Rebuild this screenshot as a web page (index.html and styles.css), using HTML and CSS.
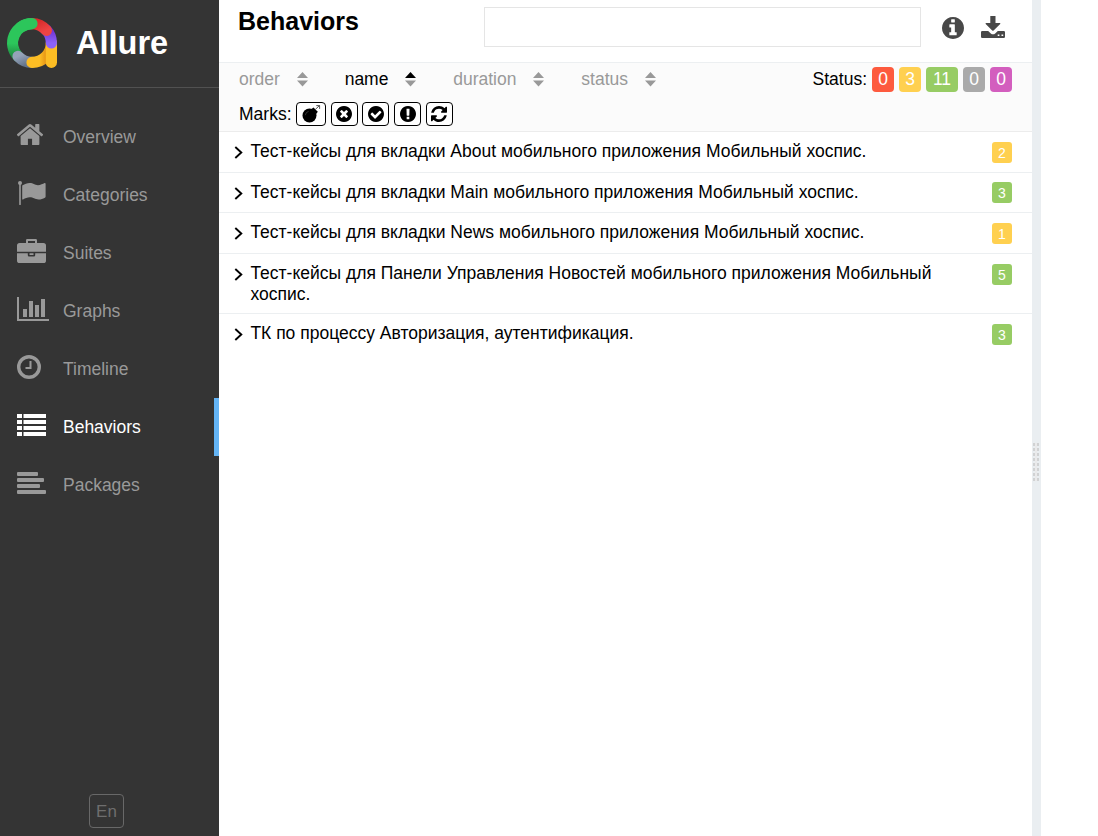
FILE: index.html
```html
<!DOCTYPE html>
<html lang="en">
<head>
<meta charset="utf-8">
<title>Allure Report</title>
<link rel="stylesheet" href="styles.css">
</head>
<body>
<div class="app">
  <aside class="side">
    <div class="brand">
      <svg class="logo" viewBox="0 0 50 50" stroke-width="11.2" stroke-linecap="round">
        <defs>
          <linearGradient id="green" x1="0" y1="0" x2="0" y2="1"><stop offset=".6" stop-color="#2cc65b"/><stop offset="1" stop-color="#1f8a41"/></linearGradient>
          <linearGradient id="red" x1="0" y1="0" x2="1" y2="1"><stop offset="0" stop-color="#d62b2b"/><stop offset="1" stop-color="#ee4444"/></linearGradient>
          <linearGradient id="purple" x1="0" y1="0" x2="0" y2="1"><stop offset="0" stop-color="#7030d0"/><stop offset="1" stop-color="#8b62fa"/></linearGradient>
          <linearGradient id="gray" x1="0" y1="0" x2="1" y2="1"><stop offset="0" stop-color="#94a3b8"/><stop offset="1" stop-color="#64748b"/></linearGradient>
          <linearGradient id="amber" x1="0" y1="0" x2="1" y2="0"><stop offset=".4" stop-color="#fcbd24"/><stop offset=".8" stop-color="#e08a12"/></linearGradient>
        </defs>
        <path stroke="url(#green)" d="M25 5.600A19.400 19.400 0 0 0 11 38.400"/>
        <path stroke="url(#gray)" d="M11 38.400A19.400 19.400 0 0 0 25 44.400"/>
        <path stroke="url(#amber)" d="M25 44.400A19.400 19.400 0 0 0 44.400 25"/>
        <path stroke="#fcbd24" d="M44.400 25V44.400"/>
        <path stroke="url(#purple)" d="M39 11.600A19.400 19.400 0 0 1 44.400 25"/>
        <path stroke="url(#red)" d="M25 5.600A19.400 19.400 0 0 1 39.400 12.400"/>
        <path stroke="#2cc65b" d="M14 9.100A19.400 19.400 0 0 1 25 5.600"/>
      </svg>
      <span>Allure</span>
    </div>
    <nav class="menu">
      <a class="item"><span class="glyph"><svg width="26" height="21" viewBox="97 253 1598 1283" preserveAspectRatio="none"><path d="M1472 992v480q0 26-19 45t-45 19h-384v-384h-256v384h-384q-26 0-45-19t-19-45v-480q0-1 .5-3t.5-3l575-474 575 474q1 2 1 6zm223-69l-62 74q-8 9-21 11h-3q-13 0-21-7l-692-577-692 577q-12 8-24 7-13-2-21-11l-62-74q-8-10-7-23.5t11-21.5l719-599q32-26 76-26t76 26l244 204v-195q0-14 9-23t23-9h192q14 0 23 9t9 23v408l219 182q10 8 11 21.5t-7 23.5z"/></svg></span>Overview</a>
      <a class="item"><span class="glyph"><svg width="29" height="24" viewBox="0 0 29 24"><circle cx="3" cy="2" r="2"/><path d="M2.2 2h1.6v21.4q0 .6-.6.6h-.4q-.6 0-.6-.6zM5.2 4.6C8 3 10 2.1 12.6 2.1c4 0 5 2.1 8.4 2.1 2.500 0 4.800-1.300 6.600-2.100q1-.3 1 .8v12.800q0 .7-.7 1c-2 1-3.900 1.800-6.200 1.800-4 0-5.200-2.200-9-2.200-2.400 0-4.400 1-6.600 2.200q-.9.400-.9-.6V5.600q0-.7 0-1z"/></svg></span>Categories</a>
      <a class="item"><span class="glyph"><svg width="29" height="24" viewBox="0 0 29 24"><path fill-rule="evenodd" d="M9 4V1.300Q9 0 10.300 0h8.400Q20 0 20 1.300V4h6.400Q29 4 29 6.600V12.700H0V6.600Q0 4 2.600 4zM11 4h7V2h-7zM0 14.200h10.800V16.300q0 1.200 1.200 1.200h5q1.200 0 1.200-1.200V14.200H29v7.200Q29 24 26.400 24H2.600Q0 24 0 21.400zM12.500 14.200h4v1.900h-4z"/></svg></span>Suites</a>
      <a class="item"><span class="glyph"><svg width="32" height="24" viewBox="0 0 32 24"><path d="M0 0h2v22h30v2H0zM6 12h4v8H6zM12 4h4v16h-4zM18 8h4v12h-4zM24 2h4v18h-4z"/></svg></span>Graphs</a>
      <a class="item"><span class="glyph"><svg width="25" height="24" viewBox="0 0 25 24"><circle class="ring" cx="12" cy="12" r="10.300"/><path d="M12.500 6H14.500V14H8.500V12H12.500z"/></svg></span>Timeline</a>
      <a class="item active"><span class="glyph"><svg width="29" height="22" viewBox="0 0 29 22"><path d="M0 0h5v4H0zM6.500 0H29v4H6.500zM0 6h5v4H0zM6.500 6H29v4H6.500zM0 12h5v4H0zM6.500 12H29v4H6.500zM0 18h5v4H0zM6.500 18H29v4H6.500z"/></svg></span>Behaviors</a>
      <a class="item"><span class="glyph"><svg width="29" height="22" viewBox="0 0 29 22"><rect width="21" height="4" rx="1"/><rect y="6" width="27" height="4" rx="1"/><rect y="12" width="23" height="4" rx="1"/><rect y="18" width="29" height="4" rx="1"/></svg></span>Packages</a>
    </nav>
    <div class="foot"><button class="lang">En</button></div>
  </aside>

  <main class="pane">
    <header class="head">
      <h1>Behaviors</h1>
      <input class="search" type="text">
      <div class="actions">
        <svg width="22" height="22" viewBox="128 128 1536 1536"><path fill-rule="evenodd" d="M1152 1376v-160q0-14-9-23t-23-9h-96v-512q0-14-9-23t-23-9h-320q-14 0-23 9t-9 23v160q0 14 9 23t23 9h96v320h-96q-14 0-23 9t-9 23v160q0 14 9 23t23 9h448q14 0 23-9t9-23zm-128-896v-160q0-14-9-23t-23-9h-192q-14 0-23 9t-9 23v160q0 14 9 23t23 9h192q14 0 23-9t9-23zm640 416q0 209-103 385.500t-279.500 279.500-385.500 103-385.500-103-279.500-279.500-103-385.500 103-385.500 279.500-279.500 385.500-103 385.500 103 279.500 279.500 103 385.500z"/></svg>
        <svg width="24" height="22" viewBox="0 0 24 22"><path fill-rule="evenodd" d="M9.300 0h5.200v7h4.300q1 .2.400 1L12.600 14.400q-.7.600-1.400 0L4.700 8q-.5-.8.400-1h4.200zM1.200 15h6l2.600 2.400q2.200 1.700 4.400 0L16.800 15h6q1.200 0 1.200 1.200v4.600Q24 22 22.800 22H1.200Q0 22 0 20.800v-4.600Q0 15 1.200 15zM16.700 18.500v1.600h1.700v-1.600zM20.500 18.500v1.600h1.700v-1.600z"/></svg>
      </div>
    </header>

    <section class="controls">
      <div class="bar">
        <div class="sorters">
          <span class="sorter">order<svg class="arrows" viewBox="0 0 11 14"><path d="M0 6L5.500 0 11 6zM0 8.500H11L5.500 14.500z"/></svg></span>
          <span class="sorter on">name<svg class="arrows" viewBox="0 0 11 14"><path d="M0 6L5.500 0 11 6z"/><path class="dim" d="M0 8.500H11L5.500 14.500z"/></svg></span>
          <span class="sorter">duration<svg class="arrows" viewBox="0 0 11 14"><path d="M0 6L5.500 0 11 6zM0 8.500H11L5.500 14.500z"/></svg></span>
          <span class="sorter">status<svg class="arrows" viewBox="0 0 11 14"><path d="M0 6L5.500 0 11 6zM0 8.500H11L5.500 14.500z"/></svg></span>
        </div>
        <div class="statuses">
          <span class="caption">Status:</span>
          <span class="label failed">0</span><span class="label broken">3</span><span class="label passed">11</span><span class="label skipped">0</span><span class="label unknown">0</span>
        </div>
      </div>
      <div class="marks">
        <span class="caption">Marks:</span>
        <span class="mark wide"><svg width="19" height="18" viewBox="0 0 19 18"><circle cx="7.500" cy="10.500" r="7"/><path d="M9.500 4l2-1.500 4.300 4.300-1.500 2z"/><path class="fuse" d="M13.200 4.600L17.600.4M14.300.6H17.600V3.900"/><path class="shine" d="M3.300 10.200q.3-3.100 3.300-3.800"/></svg></span>
        <span class="mark"><svg width="16" height="16" viewBox="128 128 1536 1536"><path fill-rule="evenodd" d="M1277 1122q0-26-19-45l-181-181 181-181q19-19 19-45 0-27-19-46l-90-90q-19-19-46-19-26 0-45 19l-181 181-181-181q-19-19-45-19-27 0-46 19l-90 90q-19 19-19 46 0 26 19 45l181 181-181 181q-19 19-19 45 0 27 19 46l90 90q19 19 46 19 26 0 45-19l181-181 181 181q19 19 45 19 27 0 46-19l90-90q19-19 19-46zm387-226q0 209-103 385.500t-279.500 279.500-385.500 103-385.500-103-279.500-279.500-103-385.500 103-385.500 279.500-279.500 385.500-103 385.500 103 279.500 279.500 103 385.500z"/></svg></span>
        <span class="mark"><svg width="16" height="16" viewBox="128 128 1536 1536"><path fill-rule="evenodd" d="M1412 734q0-28-18-46l-91-90q-19-19-45-19t-45 19l-408 407-226-226q-19-19-45-19t-45 19l-91 90q-18 18-18 46 0 27 18 45l362 362q19 19 45 19 27 0 46-19l543-543q18-18 18-45zm252 162q0 209-103 385.500t-279.500 279.500-385.500 103-385.500-103-279.500-279.500-103-385.500 103-385.500 279.500-279.500 385.500-103 385.500 103 279.500 279.500 103 385.500z"/></svg></span>
        <span class="mark"><svg width="16" height="16" viewBox="128 128 1536 1536"><path fill-rule="evenodd" d="M896 128q209 0 385.500 103t279.500 279.500 103 385.500-103 385.500-279.500 279.500-385.500 103-385.500-103-279.500-279.500-103-385.500 103-385.500 279.500-279.500 385.500-103zm128 1247v-190q0-14-9-23.500t-22-9.500h-192q-13 0-23 10t-10 23v190q0 13 10 23t23 10h192q13 0 22-9.500t9-23.500zm-2-344l18-621q0-12-10-18-10-8-24-8h-220q-14 0-24 8-10 6-10 18l17 621q0 10 10 17.500t24 7.500h185q14 0 23.500-7.500t10.500-17.500z"/></svg></span>
        <span class="mark"><svg width="16" height="16" viewBox="128 128 1536 1536"><path d="M1639 1056q0 5-1 7-64 268-268 434.500t-478 166.500q-146 0-282.500-55t-243.500-157l-129 129q-19 19-45 19t-45-19-19-45v-448q0-26 19-45t45-19h448q26 0 45 19t19 45-19 45l-137 137q71 66 161 102t187 36q134 0 250-65t186-179q11-17 53-117 8-23 30-23h192q13 0 22.500 9.500t9.500 22.500zm25-800v448q0 26-19 45t-45 19h-448q-26 0-45-19t-19-45 19-45l138-138q-148-137-349-137-134 0-250 65t-186 179q-11 17-53 117-8 23-30 23h-199q-13 0-22.500-9.500t-9.500-22.500v-7q65-268 270-434.500t480-166.500q146 0 284 55.500t245 156.500l130-129q19-19 45-19t45 19 19 45z"/></svg></span>
      </div>
    </section>

    <section class="tree">
      <div class="node"><svg class="chev" viewBox="0 0 9 13"><path d="M1.300 1L7.300 6.500 1.300 12"/></svg><div class="name">Тест-кейсы для вкладки About мобильного приложения Мобильный хоспис.</div><span class="count broken">2</span></div>
      <div class="node"><svg class="chev" viewBox="0 0 9 13"><path d="M1.300 1L7.300 6.500 1.300 12"/></svg><div class="name">Тест-кейсы для вкладки Main мобильного приложения Мобильный хоспис.</div><span class="count passed">3</span></div>
      <div class="node"><svg class="chev" viewBox="0 0 9 13"><path d="M1.300 1L7.300 6.500 1.300 12"/></svg><div class="name">Тест-кейсы для вкладки News мобильного приложения Мобильный хоспис.</div><span class="count broken">1</span></div>
      <div class="node wrapped"><svg class="chev" viewBox="0 0 9 13"><path d="M1.300 1L7.300 6.500 1.300 12"/></svg><div class="name">Тест-кейсы для Панели Управления Новостей мобильного приложения Мобильный хоспис.</div><span class="count passed">5</span></div>
      <div class="node"><svg class="chev" viewBox="0 0 9 13"><path d="M1.300 1L7.300 6.500 1.300 12"/></svg><div class="name">ТК по процессу Авторизация, аутентификация.</div><span class="count passed">3</span></div>
    </section>
  </main>

  <div class="gutter"><div class="grip"></div></div>
  <div class="detail"></div>
</div>
</body>
</html>
```

FILE: styles.css
```css
* { box-sizing: border-box; }

body {
  margin: 0;
  font: 17.5px/21px "Liberation Sans", Arial, sans-serif;
  color: #000;
  background: #fff;
}

svg { fill: currentColor; display: block; flex: none; }

.app { display: flex; height: 836px; overflow: hidden; }

/* Sidebar */
.side {
  width: 219px;
  flex: none;
  display: flex;
  flex-direction: column;
  background: #343434;
  color: #999;
}
.brand {
  height: 88px;
  padding: 0 0 1px 7px;
  display: flex;
  align-items: center;
  gap: 19px;
  border-bottom: 1px solid #515151;
  color: #fff;
  font-size: 32.5px;
  font-weight: bold;
}
.logo { width: 50px; height: 50px; overflow: visible; fill: none; }
.menu { padding-top: 20px; }
.item { display: flex; align-items: center; height: 58px; padding-left: 17.4px; }
.glyph { width: 45.6px; padding-bottom: 5px; }
.ring { fill: none; stroke: currentColor; stroke-width: 3.4; }
.active { color: #fff; border-right: 5px solid #64b5f6; }
.foot { margin-top: auto; padding: 0 0 8px 89px; }
.lang {
  display: block;
  width: 35px;
  height: 34px;
  padding: 1px 0 0;
  font: 17px "Liberation Sans", Arial, sans-serif;
  color: #6e6e6e;
  background: none;
  border: 1px solid #686868;
  border-radius: 4px;
}

/* Main pane */
.pane { width: 813px; flex: none; }
.head { display: flex; height: 62px; padding: 7px 27px 0 19px; }
.head h1 { width: 246px; margin: 0; font-size: 25px; line-height: 28px; }
.search { width: 437px; height: 40px; border: 1px solid #e5e5e5; background: #fff; }
.actions {
  display: flex;
  gap: 17px;
  padding: 10px 0 0 21px;
  color: #484848;
}
.actions svg + svg { margin-top: -1px; }

.controls {
  height: 70px;
  padding: 4px 20px 0 20px;
  background: #fbfbfb;
  border-top: 1px solid #eceff1;
  border-bottom: 1px solid #ececec;
}
.bar { display: flex; justify-content: space-between; height: 25px; }
.sorters { display: flex; gap: 36.8px; padding-top: 2px; color: #999; }
.sorter { display: flex; gap: 17px; }
.on { color: #000; }
.dim { fill: #999; }
.arrows { width: 11px; height: 14px; margin-top: 3.2px; overflow: visible; }
.statuses { display: flex; gap: 5px; }
.caption { padding-top: 2px; }
.label { min-width: 22px; height: 25px; padding: 0 6px; line-height: 25px; text-align: center; color: #fff; border-radius: 4px; }
.label.passed { min-width: 32px; }
.failed { background: #fd5a3e; }
.broken { background: #ffd050; }
.passed { background: #97cc64; }
.skipped { background: #aaa; }
.unknown { background: #d35ebe; }
.marks { display: flex; gap: 4.7px; padding-top: 10px; }
.marks .caption { margin-right: -0.2px; }
.mark {
  display: flex;
  align-items: center;
  justify-content: center;
  width: 27px;
  height: 24px;
  border: 1px solid #000;
  border-radius: 4px;
  background: #fff;
}
.wide { width: 30px; padding-bottom: 1px; }
.fuse { fill: none; stroke: #555; stroke-width: 1; }
.shine { fill: none; stroke: #555; stroke-width: 0.6; }

/* Tree */
.node { display: flex; padding: 9px 20px 9.6px 15px; border-bottom: 1px solid #eceff1; }
.node.wrapped { padding-bottom: 8.6px; }
.node:last-child { border-bottom: 0; }
.chev { width: 9px; height: 13px; margin: 5px 7.4px 0 0; fill: none; stroke: #000; stroke-width: 1.9; }
.name { width: 710px; line-height: 21px; }
.count {
  width: 20px;
  height: 21px;
  margin: 0.8px 0 -1px auto;
  border-radius: 3px;
  color: #fff;
  font-size: 14px;
  line-height: 22px;
  text-align: center;
}

/* Splitter */
.gutter { width: 9px; flex: none; padding: 443px 0 0 1px; background: #eaeef1; }
.grip {
  width: 6px;
  height: 38px;
  background: linear-gradient(#eaeaea 0 0) 2px 0 / 2px 100% no-repeat, repeating-linear-gradient(#ccc 0 3px, #eaeef1 3px 5px);
  opacity: .8;
}
.detail { flex: 1; background: #fff; }
```
